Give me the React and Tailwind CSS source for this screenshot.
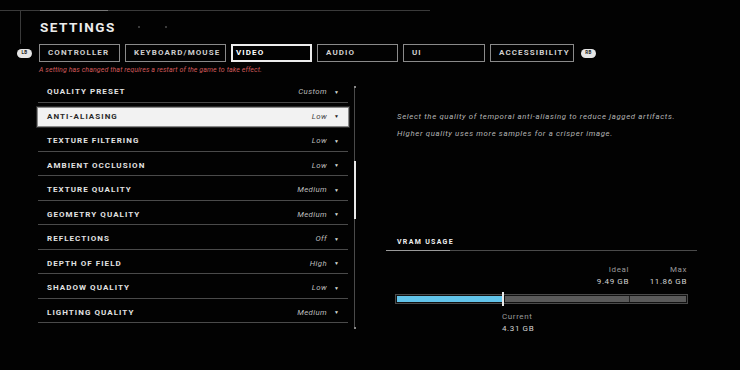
import React from "react";

const tabs = [
  { label: "CONTROLLER", w: "w-[81px]" },
  { label: "KEYBOARD/MOUSE", w: "w-[101px]" },
  { label: "VIDEO", w: "w-[81px]", active: true },
  { label: "AUDIO", w: "w-[81px]" },
  { label: "UI", w: "w-[82px]" },
  { label: "ACCESSIBILITY", w: "w-[84px]" },
];

const rows = [
  ["QUALITY PRESET", "Custom"],
  ["ANTI-ALIASING", "Low", true],
  ["TEXTURE FILTERING", "Low"],
  ["AMBIENT OCCLUSION", "Low"],
  ["TEXTURE QUALITY", "Medium"],
  ["GEOMETRY QUALITY", "Medium"],
  ["REFLECTIONS", "Off"],
  ["DEPTH OF FIELD", "High"],
  ["SHADOW QUALITY", "Low"],
  ["LIGHTING QUALITY", "Medium"],
];

function Badge({ text }) {
  return (
    <div className="w-[15px] h-[9px] rounded-full bg-[#e6e6e6] flex items-center justify-center text-[4.5px] font-bold text-[#222] tracking-[0.3px] leading-none">
      {text}
    </div>
  );
}

function Row({ label, value, selected }) {
  if (selected) {
    return (
      <div className="h-[24.5px] pt-[4px] pb-[0.5px] -mx-[1px]">
        <div className="h-full bg-[#f2f2f2] border border-[#8a8a8a] shadow-[0_0_0_1px_#2a2a2a] flex items-center pl-[9px] pr-[9px] pt-[1px]">
          <span className="text-[8px] font-bold tracking-[1.05px] text-[#2a2a2a]">{label}</span>
          <span className="ml-auto italic text-[7.8px] tracking-[0.4px] text-[#444]">{value}</span>
          <span className="ml-[7px] text-[5px] text-[#222]">▼</span>
        </div>
      </div>
    );
  }
  return (
    <div className="h-[24.5px] border-b border-[#4a4a4a] flex items-center pl-[9px] pr-[9px] pt-[5px]">
      <span className="text-[8px] font-bold tracking-[1.05px] text-[#e2e2e2]">{label}</span>
      <span className="ml-auto italic text-[7.8px] tracking-[0.4px] text-[#bdbdbd]">{value}</span>
      <span className="ml-[7px] text-[5px] text-[#d8d8d8]">▼</span>
    </div>
  );
}

export default function App() {
  return (
    <div className="w-[740px] h-[370px] bg-[#020202] overflow-hidden font-['Roboto',sans-serif] flex flex-col">
      {/* top rule */}
      <div className="h-[10px]" />
      <div className="flex w-[430px] h-px">
        <div className="w-[40px] bg-[#3a3a3a]" />
        <div className="w-[68px] bg-[#777]" />
        <div className="flex-1 bg-[#3a3a3a]" />
      </div>
      {/* header */}
      <div className="flex h-[33px] pl-[20px]">
        <div className="w-px h-full bg-[#3a3a3a]" />
        <div className="ml-[19px] mt-[9px] h-[14px] flex items-center">
          <span className="text-[13.5px] leading-[14px] font-bold tracking-[1.5px] text-[#ececec]">SETTINGS</span>
          <span className="ml-[22px] w-[2px] h-[2px] bg-[#3a3a3a]" />
          <span className="ml-[25px] w-[2px] h-[2px] bg-[#3a3a3a]" />
        </div>
      </div>
      {/* tabs */}
      <div className="flex items-center h-[18px] pl-[17px]">
        <Badge text="LB" />
        <div className="flex gap-[5px] ml-[7px]">
          {tabs.map((t) => (
            <div
              key={t.label}
              className={
                t.active
                  ? `${t.w} h-[18px] border-2 border-[#ededed] flex items-center pl-[3px] text-[8px] font-bold tracking-[1.1px] text-white`
                  : `${t.w} h-[18px] border border-[#8a8a8a] flex items-center pl-[8px] text-[8px] font-bold tracking-[1.1px] text-[#cfcfcf]`
              }
            >
              {t.label}
            </div>
          ))}
        </div>
        <div className="ml-[7px]">
          <Badge text="RB" />
        </div>
      </div>
      {/* warning */}
      <div className="h-[16px] pl-[39px] flex items-center">
        <span className="italic text-[7px] text-[#d25a5a] tracking-[0.1px]">
          A setting has changed that requires a restart of the game to take effect.
        </span>
      </div>
      {/* main */}
      <div className="flex pl-[38px]">
        <div className="w-[310px] flex flex-col">
          {rows.map(([l, v, s]) => (
            <Row key={l} label={l} value={v} selected={s} />
          ))}
        </div>
        {/* scrollbar */}
        <div className="ml-[5px] mt-[8px] flex flex-col items-center w-[3px]">
          <div className="w-[2px] h-[2px] bg-[#888]" />
          <div className="w-px h-[73px] bg-[#4a4a4a]" />
          <div className="w-[2px] h-[58px] bg-[#e8e8e8]" />
          <div className="w-px h-[108px] bg-[#4a4a4a]" />
          <div className="w-[2px] h-[2px] bg-[#888]" />
        </div>
        {/* right pane */}
        <div className="ml-[30px] w-[311px] flex flex-col">
          <div className="pl-[11px] mt-[30px]">
            <p className="italic text-[7.8px] leading-[17px] tracking-[0.65px] text-[#b4b4b4]">
              Select the quality of temporal anti-aliasing to reduce jagged artifacts.
            </p>
            <p className="italic text-[7.8px] leading-[17px] tracking-[0.65px] text-[#b4b4b4]">
              Higher quality uses more samples for a crisper image.
            </p>
          </div>
          <div className="mt-[95px] pl-[11px] h-[10px] flex items-center">
            <span className="text-[7px] font-bold tracking-[1.3px] text-[#f0f0f0]">VRAM USAGE</span>
          </div>
          <div className="mt-[3px] flex h-px">
            <div className="w-[64px] bg-[#9a9a9a]" />
            <div className="flex-1 bg-[#4a4a4a]" />
          </div>
          <div className="ml-[9px] w-[293px] mt-[13px] flex flex-col">
            <div className="flex justify-end pr-[1px]">
              <div className="text-right">
                <div className="text-[8px] leading-[12px] tracking-[0.6px] text-[#9a9a9a]">Ideal</div>
                <div className="text-[8px] leading-[12px] tracking-[0.6px] text-[#d2d2d2]">9.49 GB</div>
              </div>
              <div className="w-[58px] text-right">
                <div className="text-[8px] leading-[12px] tracking-[0.6px] text-[#9a9a9a]">Max</div>
                <div className="text-[8px] leading-[12px] tracking-[0.6px] text-[#d2d2d2]">11.86 GB</div>
              </div>
            </div>
            <div className="mt-[6px] h-[10px] border border-[#4a4a4a] bg-[#111] p-px flex relative">
              <div className="w-[106px] bg-[#62c4ea]" />
              <div className="w-[2px]" />
              <div className="w-[124px] bg-[#5a5a5a]" />
              <div className="w-px bg-[#222]" />
              <div className="flex-1 bg-[#5a5a5a]" />
              <div className="absolute left-[106px] top-[-3px] w-[2px] h-[14px] bg-[#e8e8e8]" />
            </div>
            <div className="mt-[7px] ml-[107px]">
              <div className="text-[8px] leading-[12px] tracking-[0.6px] text-[#9a9a9a]">Current</div>
              <div className="text-[8px] leading-[12px] tracking-[0.6px] text-[#d2d2d2]">4.31 GB</div>
            </div>
          </div>
        </div>
      </div>
    </div>
  );
}
